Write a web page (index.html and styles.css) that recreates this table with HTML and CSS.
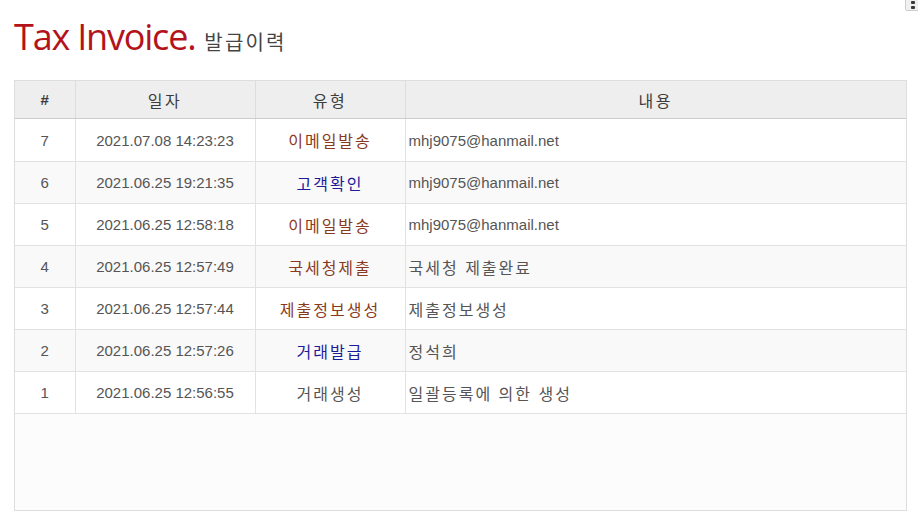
FILE: index.html
```html
<!DOCTYPE html>
<html lang="ko">
<head>
<meta charset="utf-8">
<title>Tax Invoice 발급이력</title>
<link rel="stylesheet" href="styles.css">
</head>
<body>
<div class="corner-btn"><span class="dot"></span><span class="dot"></span></div>
<div class="page">
  <h1 class="title"><span class="title-main">Tax Invoice.</span> <span class="title-sub">발급이력</span></h1>
  <div class="grid-box">
    <table class="grid">
      <colgroup>
        <col class="c-no"><col class="c-date"><col class="c-type"><col class="c-desc">
      </colgroup>
      <thead>
        <tr><th class="hash">#</th><th class="ko">일자</th><th class="ko">유형</th><th class="ko">내용</th></tr>
      </thead>
      <tbody>
        <tr class="first"><td>7</td><td>2021.07.08 14:23:23</td><td class="ko brown">이메일발송</td><td class="desc">mhj9075@hanmail.net</td></tr>
        <tr><td>6</td><td>2021.06.25 19:21:35</td><td class="ko blue">고객확인</td><td class="desc">mhj9075@hanmail.net</td></tr>
        <tr><td>5</td><td>2021.06.25 12:58:18</td><td class="ko brown">이메일발송</td><td class="desc">mhj9075@hanmail.net</td></tr>
        <tr><td>4</td><td>2021.06.25 12:57:49</td><td class="ko brown">국세청제출</td><td class="desc ko">국세청 제출완료</td></tr>
        <tr><td>3</td><td>2021.06.25 12:57:44</td><td class="ko brown">제출정보생성</td><td class="desc ko">제출정보생성</td></tr>
        <tr><td>2</td><td>2021.06.25 12:57:26</td><td class="ko blue">거래발급</td><td class="desc ko">정석희</td></tr>
        <tr><td>1</td><td>2021.06.25 12:56:55</td><td class="ko gray">거래생성</td><td class="desc ko">일괄등록에 의한 생성</td></tr>
      </tbody>
    </table>
  </div>
</div>
</body>
</html>
```
FILE: styles.css
```css
html, body {
  margin: 0;
  padding: 0;
  background: #ffffff;
}
body {
  font-family: "Liberation Sans", "Noto Sans CJK KR", sans-serif;
  color: #555555;
}
.corner-btn {
  position: absolute;
  top: -3px;
  left: 905px;
  width: 16px;
  height: 14px;
  border: 1px solid #cfcfcf;
  border-radius: 2px;
  background: #f0f0f0;
  box-sizing: border-box;
  display: flex;
  flex-direction: column;
  gap: 2px;
  padding: 3px 0 0 5px;
}
.corner-btn .dot {
  display: block;
  width: 4px;
  height: 3px;
  border-radius: 1px;
  background: #3a3a3a;
}
.page {
  padding: 16px 11px 0 14px;
}
.title {
  margin: 0;
  height: 64px;
  font-weight: normal;
  line-height: 42px;
  white-space: nowrap;
}
.title-main {
  font-family: "Open Sans", sans-serif;
  font-size: 36px;
  letter-spacing: -1.2px;
  color: #b3141c;
}
.title-sub {
  font-family: "Noto Sans CJK KR", sans-serif;
  font-size: 20px;
  color: #444444;
  letter-spacing: 2.2px;
}
.grid-box {
  border: 1px solid #dddddd;
  background: #fcfcfc;
  height: 429px;
}
.grid {
  width: 100%;
  border-collapse: collapse;
  table-layout: fixed;
  font-size: 15px;
}
.c-no { width: 60px; }
.c-date { width: 180px; }
.c-type { width: 150px; }
.grid th {
  height: 37px;
  padding: 0;
  background: #eeeeee;
  color: #3c3c3c;
  font-weight: normal;
  border-left: 1px solid #dddddd;
  border-bottom: 1px solid #cccccc;
  text-align: center;
}
.grid th.ko {
  font-size: 16px;
  letter-spacing: 2.5px;
}
.grid th:first-child, .grid td:first-child {
  border-left: none;
}
.grid th.hash {
  font-weight: bold;
  font-size: 15px;
}
.grid td {
  height: 41px;
  padding: 0;
  text-align: center;
  border-left: 1px solid #e2e2e2;
  border-bottom: 1px solid #e2e2e2;
  white-space: nowrap;
  background: #ffffff;
}
.grid tr.first td {
  height: 42px;
}
.grid tbody tr:nth-child(even) td {
  background: #f9f9f9;
}
.grid td.desc {
  text-align: left;
  padding-left: 3px;
}
.ko {
  font-family: "Noto Sans CJK KR", sans-serif;
  font-size: 16px;
  letter-spacing: 2px;
}
.brown { color: #8a3a1c; }
.blue { color: #1c1c9a; }
.gray { color: #555555; }
```
